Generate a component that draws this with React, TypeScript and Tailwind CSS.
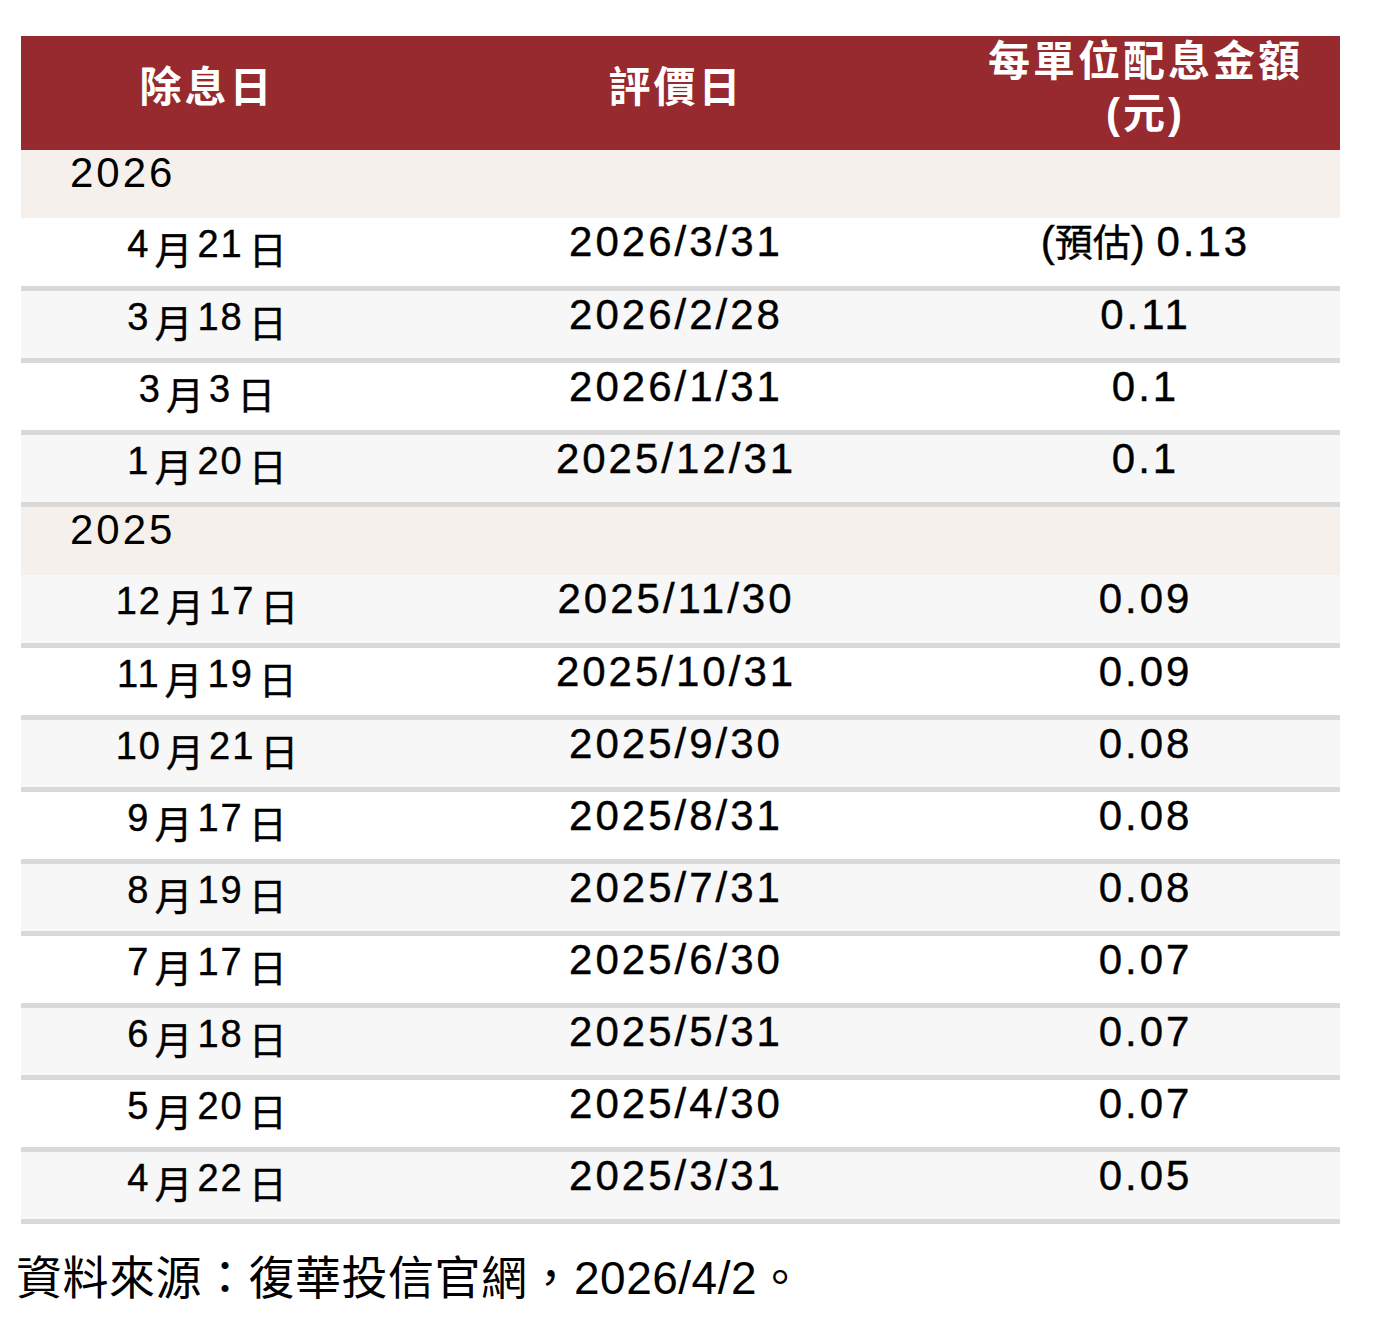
type Row = { m: number; d: number; ref: string; amt: string; est?: boolean };

type Group = { year: string; grayFirst: boolean; rows: Row[] };

const groups: Group[] = [
  {
    year: "2026",
    grayFirst: false,
    rows: [
      { m: 4, d: 21, ref: "2026/3/31", amt: "0.13", est: true },
      { m: 3, d: 18, ref: "2026/2/28", amt: "0.11" },
      { m: 3, d: 3, ref: "2026/1/31", amt: "0.1" },
      { m: 1, d: 20, ref: "2025/12/31", amt: "0.1" },
    ],
  },
  {
    year: "2025",
    grayFirst: true,
    rows: [
      { m: 12, d: 17, ref: "2025/11/30", amt: "0.09" },
      { m: 11, d: 19, ref: "2025/10/31", amt: "0.09" },
      { m: 10, d: 21, ref: "2025/9/30", amt: "0.08" },
      { m: 9, d: 17, ref: "2025/8/31", amt: "0.08" },
      { m: 8, d: 19, ref: "2025/7/31", amt: "0.08" },
      { m: 7, d: 17, ref: "2025/6/30", amt: "0.07" },
      { m: 6, d: 18, ref: "2025/5/31", amt: "0.07" },
      { m: 5, d: 20, ref: "2025/4/30", amt: "0.07" },
      { m: 4, d: 22, ref: "2025/3/31", amt: "0.05" },
    ],
  },
];

const DateText = ({ m, d }: { m: number; d: number }) => (
  <span className="text-[38px] leading-[40px] tracking-[2px]">
    {m}
    <span className="ml-[4px] mr-[5px] align-[-7px] text-[38px] tracking-normal">月</span>
    {d}
    <span className="ml-[5px] align-[-7px] text-[38px] tracking-normal">日</span>
  </span>
);

const DataRow = ({ row, gray, first }: { row: Row; gray: boolean; first: boolean }) => (
  <div
    className={`grid grid-cols-[372px_566px_381px] border-b-[5px] border-[#d9d9d9] [-webkit-text-stroke:0.4px_black] ${
      first ? "h-[73px]" : "h-[72px]"
    } ${gray ? "bg-[#f7f7f7]" : "bg-white"}`}
  >
    <div className="pt-[6px] text-center leading-[40px]">
      <DateText m={row.m} d={row.d} />
    </div>
    <div className="text-center text-[42px] leading-[48px] tracking-[3px]">{row.ref}</div>
    <div className="pr-[8px] text-center text-[42px] leading-[48px] tracking-[3px]">
      {row.est && (
        <span className="tracking-normal">
          (<span className="text-[38px]">預估</span>){" "}
        </span>
      )}
      {row.amt}
    </div>
  </div>
);

export default function App() {
  return (
    <div className="min-h-[1329px] bg-white pt-[36px] text-black [font-family:'Liberation_Sans','Noto_Sans_CJK_TC',sans-serif]">
      <div className="ml-[21px] w-[1319px]">
        <div className="grid h-[114px] grid-cols-[372px_566px_381px] bg-[#962a2e] text-[42px] font-semibold leading-[52px] tracking-[3px] text-white">
          <div className="flex items-center justify-center pb-[12px]">除息日</div>
          <div className="flex items-center justify-center pb-[12px]">評價日</div>
          <div className="flex items-center justify-center pb-[12px] pr-[8px] text-center">
            <div>
              每單位配息金額
              <br />
              (元)
            </div>
          </div>
        </div>

        {groups.map((g) => (
          <div key={g.year}>
            <div className="h-[68px] bg-[#f5f0ec] pl-[49px] text-[42px] leading-[46px] tracking-[3px]">
              {g.year}
            </div>
            {g.rows.map((r, i) => (
              <DataRow
                key={r.ref}
                row={r}
                first={i === 0}
                gray={g.grayFirst ? i % 2 === 0 : i % 2 === 1}
              />
            ))}
          </div>
        ))}
      </div>

      <p className="mt-[26px] pl-[16px] text-[46px] leading-[56px] tracking-[0.5px]">
        資料來源：復華投信官網，2026/4/2。
      </p>
    </div>
  );
}
